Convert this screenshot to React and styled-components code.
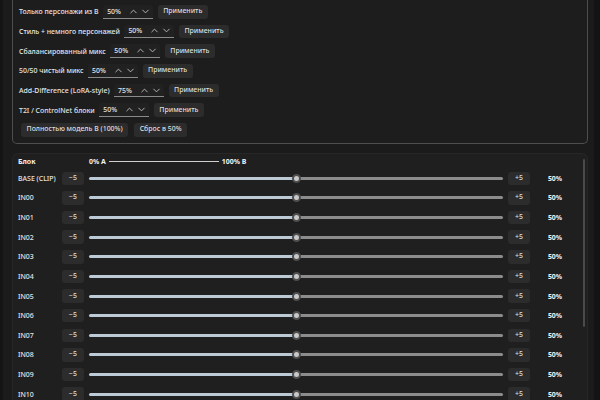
import React from "react";
import styled, { createGlobalStyle } from "styled-components";
import { ChevronUp, ChevronDown } from "lucide-react";

const Global = createGlobalStyle`
  html, body { margin: 0; padding: 0; background: #141414; }
  body { font-family: "Noto Sans", "Open Sans", sans-serif; font-size: 6.95px; font-weight: 500; color: #e4e4e4; overflow: hidden; }
  * { box-sizing: border-box; }
`;

const Page = styled.div`
  margin: 0 6px 0 3px;
  height: 400px;
  background: #1b1b1b;
  padding: 0 6px 0 9px;
  display: flex;
  flex-direction: column;
  gap: 9.5px;
  overflow: hidden;
`;

const PresetPanel = styled.section`
  border: 1px solid #4e4e4e;
  border-top: none;
  border-radius: 0 0 5px 5px;
  background: #1d1d1d;
  padding: 5px 6px 6px 6px;
  display: flex;
  flex-direction: column;
  gap: 6.2px;
`;

const PresetRow = styled.div`
  display: flex;
  align-items: center;
  gap: ${(p) => p.$gap ?? 4.5}px;
  height: 13.5px;
  padding-left: ${(p) => p.$indent ?? 0}px;
`;

const PresetLabel = styled.span`
  white-space: nowrap;
`;

const Select = styled.div`
  width: 50px;
  height: 13.5px;
  display: flex;
  align-items: center;
  padding: 0 2px 0 4px;
  background: #212121;
  border-radius: 3px 3px 0 0;
  border-bottom: 1px solid #8a8a8a;
  color: #e6e6e6;
  gap: 1px;
`;

const SelectValue = styled.span`
  flex: 1;
`;

const Button = styled.button`
  font: inherit;
  color: #dedede;
  background: #2c2c2c;
  border: none;
  border-radius: 3px;
  height: 13.5px;
  padding: 0 ${(p) => p.$pad ?? 5.5}px;
  display: inline-flex;
  align-items: center;
  justify-content: center;
  white-space: nowrap;
  line-height: 1;
`;

const BlockPanel = styled.section`
  position: relative;
  flex: 1;
  background: #1f1f1f;
  border: 1px solid #272727;
  border-bottom: none;
  border-radius: 6px 6px 0 0;
  padding: 3px 0 0 5px;
`;

const Scrollbar = styled.div`
  position: absolute;
  right: 2px;
  top: 5px;
  width: 2px;
  height: 168px;
  border-radius: 1px;
  background: #4a4a4a;
`;

const Grid = styled.div`
  display: grid;
  grid-template-columns: 39px 22px 414px 22px 40px;
  column-gap: 5px;
  grid-template-rows: 8px;
  grid-auto-rows: 13px;
  row-gap: 6.64px;
  align-items: center;
`;

const HeadCell = styled.div`
  font-weight: 700;
  color: #f2f2f2;
  grid-column: ${(p) => p.$col || "auto"};
  display: flex;
  align-items: center;
  gap: 3px;
  white-space: nowrap;
`;

const LegendLine = styled.span`
  width: 110px;
  height: 1px;
  background: #d0d0d0;
`;

const BlockLabel = styled.span`
  white-space: nowrap;
`;

const Track = styled.div`
  position: relative;
  height: 3px;
  border-radius: 2px;
`;

const Thumb = styled.span`
  position: absolute;
  top: 50%;
  width: 9px;
  height: 9px;
  margin: -4.5px 0 0 -4.5px;
  border-radius: 50%;
  background: #c8c8c8;
  border: 2.5px solid #4e4e4e;
`;

const Value = styled.span`
  text-align: center;
  font-weight: 700;
  color: #f2f2f2;
`;

const presets = [
  ["Только персонажи из B", "50%"],
  ["Стиль + немного персонажей", "50%"],
  ["Сбалансированный микс", "50%"],
  ["50/50 чистый микс", "50%"],
  ["Add-Difference (LoRA-style)", "75%"],
  ["T2I / ControlNet блоки", "50%"],
];

const blocks = ["BASE (CLIP)", "IN00", "IN01", "IN02", "IN03", "IN04", "IN05", "IN06", "IN07", "IN08", "IN09", "IN10", "IN11"];

function Slider({ value }) {
  const pct = `${value}%`;
  return (
    <Track style={{ background: `linear-gradient(to right, #bccad6 ${pct}, #8c8c8c ${pct})` }}>
      <Thumb style={{ left: pct }} />
    </Track>
  );
}

export default function App() {
  return (
    <>
      <Global />
      <Page>
        <PresetPanel>
          {presets.map(([label, v]) => (
            <PresetRow key={label}>
              <PresetLabel>{label}</PresetLabel>
              <Select>
                <SelectValue>{v}</SelectValue>
                <ChevronUp size={11} strokeWidth={2} color="#bdbdbd" />
                <ChevronDown size={11} strokeWidth={2} color="#bdbdbd" />
              </Select>
              <Button>Применить</Button>
            </PresetRow>
          ))}
          <PresetRow $indent={2} $gap={6}>
            <Button>Полностью модель B (100%)</Button>
            <Button>Сброс в 50%</Button>
          </PresetRow>
        </PresetPanel>
        <BlockPanel>
          <Scrollbar />
          <Grid>
            <HeadCell $col="1 / span 2">Блок</HeadCell>
            <HeadCell $col="3 / span 3">
              0% A <LegendLine /> 100% B
            </HeadCell>
            {blocks.map((b) => (
              <React.Fragment key={b}>
                <BlockLabel>{b}</BlockLabel>
                <Button $pad={0}>−5</Button>
                <Slider value={50} />
                <Button $pad={0}>+5</Button>
                <Value>50%</Value>
              </React.Fragment>
            ))}
          </Grid>
        </BlockPanel>
      </Page>
    </>
  );
}
